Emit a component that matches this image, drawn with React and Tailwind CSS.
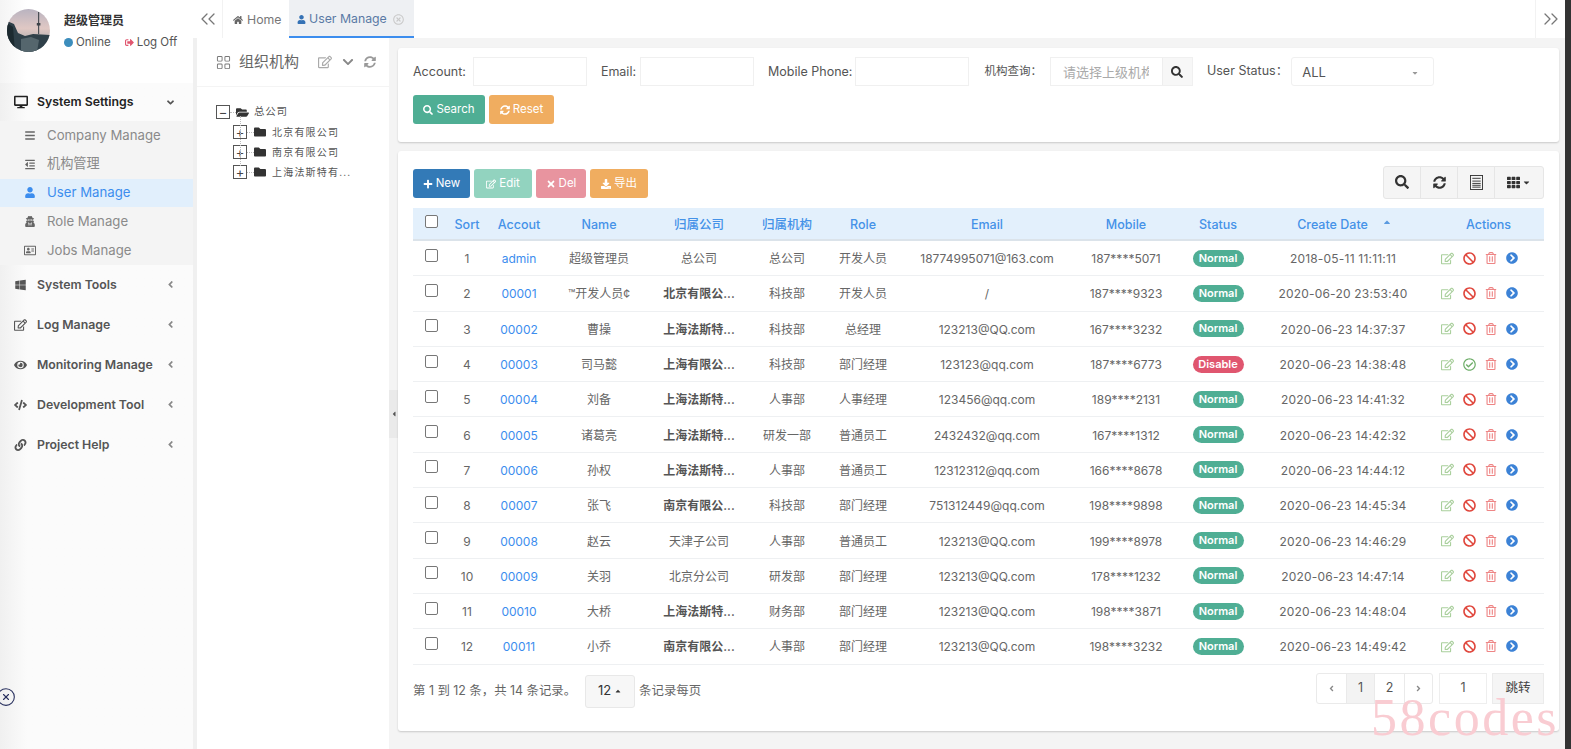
import React from 'react';
import {
  FaDesktop, FaWindows, FaRegEdit, FaEye, FaCode, FaLink, FaAngleDown, FaAngleLeft, FaAngleRight,
  FaHome, FaUser, FaBars, FaOutdent, FaUserSecret, FaRegAddressCard,
  FaSignOutAlt, FaSearch, FaSyncAlt, FaPlus, FaTimes, FaDownload, FaTh, FaCaretDown, FaCaretUp,
  FaBan, FaRegCheckCircle, FaRegTrashAlt, FaChevronCircleRight, FaChevronDown, FaFolder, FaFolderOpen, FaRegTimesCircle, FaCaretLeft,
} from 'react-icons/fa';
import { BsGrid } from 'react-icons/bs';
import { ChevronsLeft, ChevronsRight, CircleX } from 'lucide-react';

const FONT = "font-['Inter','Noto_Sans_CJK_SC',sans-serif]";

const rows = [
  ['1', 'admin', '超级管理员', '总公司', false, '总公司', '开发人员', '18774995071@163.com', '187****5071', true, '2018-05-11 11:11:11'],
  ['2', '00001', '™开发人员¢', '北京有限公...', true, '科技部', '开发人员', '/', '187****9323', true, '2020-06-20 23:53:40'],
  ['3', '00002', '曹操', '上海法斯特...', true, '科技部', '总经理', '123213@QQ.com', '167****3232', true, '2020-06-23 14:37:37'],
  ['4', '00003', '司马懿', '上海有限公...', true, '科技部', '部门经理', '123123@qq.com', '187****6773', false, '2020-06-23 14:38:48'],
  ['5', '00004', '刘备', '上海法斯特...', true, '人事部', '人事经理', '123456@qq.com', '189****2131', true, '2020-06-23 14:41:32'],
  ['6', '00005', '诸葛亮', '上海法斯特...', true, '研发一部', '普通员工', '2432432@qq.com', '167****1312', true, '2020-06-23 14:42:32'],
  ['7', '00006', '孙权', '上海法斯特...', true, '人事部', '普通员工', '12312312@qq.com', '166****8678', true, '2020-06-23 14:44:12'],
  ['8', '00007', '张飞', '南京有限公...', true, '科技部', '部门经理', '751312449@qq.com', '198****9898', true, '2020-06-23 14:45:34'],
  ['9', '00008', '赵云', '天津子公司', false, '人事部', '普通员工', '123213@QQ.com', '199****8978', true, '2020-06-23 14:46:29'],
  ['10', '00009', '关羽', '北京分公司', false, '研发部', '部门经理', '123213@QQ.com', '178****1232', true, '2020-06-23 14:47:14'],
  ['11', '00010', '大桥', '上海法斯特...', true, '财务部', '部门经理', '123213@QQ.com', '198****3871', true, '2020-06-23 14:48:04'],
  ['12', '00011', '小乔', '南京有限公...', true, '人事部', '部门经理', '123213@QQ.com', '198****3232', true, '2020-06-23 14:49:42'],
];

const subMenu = [
  [FaBars, 'Company Manage'],
  [FaOutdent, '机构管理'],
  [FaUser, 'User Manage', true],
  [FaUserSecret, 'Role Manage'],
  [FaRegAddressCard, 'Jobs Manage'],
];

const mainMenu = [
  [FaWindows, 'System Tools'],
  [FaRegEdit, 'Log Manage'],
  [FaEye, 'Monitoring Manage'],
  [FaCode, 'Development Tool'],
  [FaLink, 'Project Help'],
];

// 头像
const Avatar = () => (
  <svg viewBox="0 0 43 43" className="w-[43px] h-[43px] shrink-0">
    <defs>
      <linearGradient id="sky" x1="0" y1="0" x2="0" y2="1">
        <stop offset="0" stopColor="#b9b3c0" />
        <stop offset="0.45" stopColor="#e0c8c4" />
        <stop offset="1" stopColor="#8c9aa0" />
      </linearGradient>
      <clipPath id="round"><circle cx="21.5" cy="21.5" r="21.5" /></clipPath>
    </defs>
    <g clipPath="url(#round)">
      <rect width="43" height="43" fill="url(#sky)" />
      <path d="M0 12 L7 15 L11 24 L18 27 L26 25 L43 26 L43 43 L0 43 Z" fill="#2f4049" />
      <path d="M0 14 L6 18 L8 43 L0 43 Z" fill="#1c2a30" />
      <path d="M14 30 L24 28 L32 31 L30 43 L14 43 Z" fill="#55666d" />
      <rect x="31" y="3" width="1.2" height="22" fill="#4a4f55" />
      <rect x="29.8" y="14" width="3.6" height="2.5" fill="#3d4248" />
    </g>
  </svg>
);

const Sidebar = () => (
  <aside className="w-[193px] shrink-0 bg-linear-to-r from-[#f0f0f0] to-[#fbfbfb] to-[14%] relative">
    <div className="h-[83px] bg-linear-to-r from-[#f4f4f4] to-white to-[14%] flex pl-[7px] pt-[9px]">
      <Avatar />
      <div className="ml-[14px] pt-[4px]">
        <div className="text-[12px] leading-[16px] font-semibold text-[#333]">超级管理员</div>
        <div className="flex items-center mt-[5px] text-[11.5px] leading-[16px] text-[#555]">
          <span className="w-[9px] h-[9px] rounded-full bg-[#3c8dbc]" />
          <span className="ml-[3px]">Online</span>
          <FaSignOutAlt className="ml-[14px] text-[9px] text-[#e0566f]" />
          <span className="ml-[3px]">Log Off</span>
        </div>
      </div>
    </div>
    <div className="h-[38px] flex items-center pl-[14px] pr-[17px] text-[#222]">
      <FaDesktop className="text-[14px] w-[14px]" />
      <span className="ml-[9px] text-[12.3px] font-semibold">System Settings</span>
      <FaAngleDown className="ml-auto text-[11px] text-[#555]" />
    </div>
    <div className="bg-[#f4f4f4]">
      {subMenu.map(([Icon, label, active]) => (
        <div key={label} className={`h-[28.8px] flex items-center pl-[24px] text-[13.2px] ${active ? 'bg-[#e1effc] text-[#3c8dee]' : 'text-[#8a8a8a]'}`}>
          <Icon className={`w-[12px] text-[11px] ${active ? 'text-[#3c8dee]' : 'text-[#666]'}`} />
          <span className="ml-[11px]">{label}</span>
        </div>
      ))}
    </div>
    {mainMenu.map(([Icon, label]) => (
      <div key={label} className="h-[40px] flex items-center pl-[14px] pr-[17px] text-[#555]">
        <Icon className="w-[13px] text-[12px]" />
        <span className="ml-[10px] text-[12.3px] font-semibold">{label}</span>
        <FaAngleLeft className="ml-auto text-[11px] text-[#888]" />
      </div>
    ))}
    <CircleX size={20} strokeWidth={1.3} className="absolute left-[-4px] top-[687px] text-[#28305e]" />
  </aside>
);

const TopBar = () => (
  <div className="h-[38px] flex items-stretch bg-white shrink-0">
    <div className="w-[30px] flex items-center justify-center text-[#777] border-r border-[#f2f2f2]">
      <ChevronsLeft size={24} strokeWidth={1.3} />
    </div>
    <div className="w-[66px] flex items-center pl-[10px] pt-[2px] text-[12.3px] text-[#777]">
      <FaHome className="text-[10px] mr-[4px] text-[#666]" />Home
    </div>
    <div className="flex items-center w-[125px] pl-[8px] pt-[2px] text-[12.3px] text-[#5a7aa5] bg-[#eef0f3] border-b-2 border-[#3c8dee]">
      <FaUser className="text-[9px] mr-[3px] text-[#3572b5]" />User Manage
      <FaRegTimesCircle className="text-[11px] ml-[6px] text-[#c9c9c9]" />
    </div>
    <div className="ml-auto w-[30px] flex items-center justify-center text-[#777] border-l border-[#f2f2f2]">
      <ChevronsRight size={24} strokeWidth={1.3} />
    </div>
  </div>
);

const TreeBox = ({ children }) => (
  <span className="w-[14px] h-[14px] shrink-0 border border-[#555] flex items-center justify-center text-[13px] leading-none text-[#444]">{children}</span>
);

const TreeNode = ({ label, last }) => (
  <div className="h-[20px] flex items-center pl-[17px] relative">
    <span className={`absolute left-[24px] top-[-6px] ${last ? 'h-[10px]' : 'h-[20px]'} border-l border-dotted border-[#bbb]`} />
    <TreeBox>+</TreeBox>
    <span className="w-[7px] border-t border-dotted border-[#bbb]" />
    <FaFolder className="text-[12px] text-[#333]" />
    <span className="ml-[6px] text-[10px] tracking-[1.2px] text-[#555] whitespace-nowrap">{label}</span>
  </div>
);

const OrgPanel = () => (
  <div className="w-[192px] shrink-0 bg-white relative">
    <div className="h-[49px] flex items-center pl-[19px] border-b border-[#f4f4f4] text-[#888]">
      <BsGrid className="text-[15px] text-[#777]" />
      <span className="ml-[8px] text-[15px] text-[#666]">组织机构</span>
      <FaRegEdit className="ml-[19px] text-[14px] text-[#aaa]" />
      <FaChevronDown className="ml-[10px] text-[12px] text-[#888]" />
      <FaSyncAlt className="ml-[10px] text-[12px] text-[#999]" />
    </div>
    <div className="pt-[15px] pl-[19px]">
      <div className="h-[20px] flex items-center">
        <TreeBox>−</TreeBox>
        <span className="w-[6px] border-t border-dotted border-[#bbb]" />
        <FaFolderOpen className="text-[13px] text-[#333]" />
        <span className="ml-[5px] text-[10.5px] tracking-[0.7px] text-[#555]">总公司</span>
      </div>
      <TreeNode label="北京有限公司" />
      <TreeNode label="南京有限公司" />
      <TreeNode label="上海法斯特有..." last />
    </div>
    <div className="absolute right-[-9px] top-[352px] w-[9px] h-[48px] bg-[#eaeaea] flex items-center justify-center">
      <FaCaretLeft className="text-[8px] text-[#555]" />
    </div>
  </div>
);

const Field = ({ label, w, labelClass = '' }) => (
  <div className="flex items-center">
    <span className={`text-[12.5px] text-[#555] pt-[2px] ${labelClass}`}>{label}</span>
    <div className={`${w} h-[29px] border border-[#f0f0f0] bg-white`} />
  </div>
);

const Btn = ({ icon: Icon, label, className }) => (
  <div className={`h-[29px] rounded-[3px] flex items-center justify-center text-[11.5px] text-white ${className}`}>
    <Icon className="text-[10px] mr-[3px]" />{label}
  </div>
);

const SearchCard = () => (
  <div className="h-[94px] bg-white rounded-[3px] shadow-[0_1px_2px_rgba(0,0,0,0.18)] pl-[15px] pt-[9px]">
    <div className="flex items-center">
      <Field label="Account:" w="w-[114px]" labelClass="mr-[7px]" />
      <Field label="Email:" w="w-[114px]" labelClass="ml-[14px] mr-[4px]" />
      <Field label="Mobile Phone:" w="w-[114px]" labelClass="ml-[14px] mr-[3px]" />
      <span className="ml-[15px] text-[11.5px] text-[#555]">机构查询：</span>
      <div className="ml-[8px] w-[143px] h-[29px] border border-[#f0f0f0] flex">
        <div className="flex-1 min-w-0 pl-[12px] pr-0 mr-[13px] pt-[1px] text-[13px] leading-[27px] text-[#aaa] overflow-hidden whitespace-nowrap">请选择上级机构</div>
        <div className="w-[30px] shrink-0 bg-[#f7f7f7] border-l border-[#eee] flex items-center justify-center">
          <FaSearch className="text-[12px] text-[#333]" />
        </div>
      </div>
      <span className="ml-[14px] text-[12.5px] text-[#555]">User Status：</span>
      <div className="ml-[3px] w-[143px] h-[29px] border border-[#f0f0f0] rounded-[3px] flex items-center pl-[10px] pr-[14px] pt-[2px] text-[13px] text-[#555]">
        ALL
        <FaCaretDown className="ml-auto text-[8px] text-[#999]" />
      </div>
    </div>
    <div className="flex gap-[4px] mt-[9px]">
      <Btn icon={FaSearch} label="Search" className="w-[72px] bg-[#4fae94]" />
      <Btn icon={FaSyncAlt} label="Reset" className="w-[65px] bg-[#f0ad60]" />
    </div>
  </div>
);

const ToolBtn = ({ children, className = '' }) => (
  <div className={`h-[33px] bg-[#f5f5f5] border border-[#e6e6e6] -ml-px flex items-center justify-center text-[#333] ${className}`}>{children}</div>
);

const ListIcon = () => (
  <svg viewBox="0 0 14 16" className="w-[13px] h-[15px]" fill="none" stroke="#333" strokeWidth="1">
    <rect x="0.5" y="0.5" width="13" height="15" />
    <path d="M2.5 3.5h9M2.5 6.5h9M2.5 9h9M2.5 11h9M2.5 13h9" />
  </svg>
);

const COLS = 'grid-cols-[36px_36px_68px_92px_108px_68px_84px_164px_114px_70px_180px_1fr]';

const TableCard = () => (
  <div className="mt-[9px] h-[580px] bg-white rounded-[3px] shadow-[0_1px_2px_rgba(0,0,0,0.18)] pl-[15px] pr-[15px] pt-[15px] relative">
    <div className="flex items-center justify-between h-[33px]">
      <div className="flex gap-[4px] pt-[2px]">
        <Btn icon={FaPlus} label="New" className="w-[57px] bg-[#337ab7]" />
        <Btn icon={FaRegEdit} label="Edit" className="w-[58px] bg-[#92d3bf]" />
        <Btn icon={FaTimes} label="Del" className="w-[50px] bg-[#e8949f]" />
        <Btn icon={FaDownload} label="导出" className="w-[58px] bg-[#f0ad60]" />
      </div>
      <div className="flex -mt-[1px]">
        <ToolBtn className="w-[38px] rounded-l-[3px]"><FaSearch className="text-[14px]" /></ToolBtn>
        <ToolBtn className="w-[38px]"><FaSyncAlt className="text-[13px]" /></ToolBtn>
        <ToolBtn className="w-[38px]"><ListIcon /></ToolBtn>
        <ToolBtn className="w-[50px] rounded-r-[3px]"><FaTh className="text-[13px]" /><FaCaretDown className="text-[9px] ml-[2px]" /></ToolBtn>
      </div>
    </div>
    <div className={`mt-[9px] h-[33px] pt-[4px] grid ${COLS} items-center bg-[#e3f0fc] border-b-2 border-[#dbe3ea] text-[12.5px] text-[#4592e8] text-center font-medium`}>
      <div className="flex justify-center"><span className="w-[13px] h-[13px] border border-[#777] rounded-[2px] bg-white -mt-[8px]" /></div>
      <div>Sort</div>
      <div>Accout</div>
      <div>Name</div>
      <div>归属公司</div>
      <div>归属机构</div>
      <div>Role</div>
      <div>Email</div>
      <div>Mobile</div>
      <div>Status</div>
      <div className="flex items-center justify-center pl-[3px]">Create Date<FaCaretUp className="ml-[14px] w-[10px] -mt-[8px] text-[10px] text-[#5a9ae0]" /></div>
      <div>Actions</div>
    </div>
    {rows.map((r) => (
      <div key={r[0]} className={`h-[35.3px] pt-[2px] grid ${COLS} items-center border-b border-[#eef0f2] text-[12px] text-[#666] text-center`}>
        <div className="flex justify-center"><span className="w-[13px] h-[13px] border border-[#777] rounded-[2px] -mt-[8px]" /></div>
        <div>{r[0]}</div>
        <div className="text-[#3c8dee]">{r[1]}</div>
        <div>{r[2]}</div>
        <div className={r[4] ? 'font-semibold text-[#555]' : ''}>{r[3]}</div>
        <div>{r[5]}</div>
        <div>{r[6]}</div>
        <div>{r[7]}</div>
        <div>{r[8]}</div>
        <div className="flex justify-center -mt-[2px]">
          <span className={`h-[17px] w-[51px] rounded-full text-[11px] leading-[17px] font-semibold text-white ${r[9] ? 'bg-[#4fae94]' : 'bg-[#e0566f]'}`}>{r[9] ? 'Normal' : 'Disable'}</span>
        </div>
        <div className="tracking-[0.2px]">{r[10]}</div>
        <div className="flex items-center pl-[8px] gap-[9px] text-[13px] -mt-[2px]">
          <FaRegEdit className="text-[#a9cf9c]" />
          {r[9] ? <FaBan className="text-[#e0483e]" /> : <FaRegCheckCircle className="text-[#6fae6a]" />}
          <FaRegTrashAlt className="text-[12px] text-[#ee8585]" />
          <FaChevronCircleRight className="text-[12px] text-[#3c82d6]" />
        </div>
      </div>
    ))}
    <div className="flex items-start justify-between mt-[8px]">
      <div className="flex items-center text-[12.4px] text-[#666] mt-[2px]">
        <span>第 1 到 12 条，共 14 条记录。</span>
        <div className="ml-[9px] w-[50px] h-[33px] bg-[#f7f7f7] border border-[#e8e8e8] rounded-[3px] flex items-center justify-center text-[13px] text-[#333]">
          12<FaCaretUp className="ml-[3px] text-[8px]" />
        </div>
        <span className="ml-[4px]">条记录每页</span>
      </div>
      <div className="flex items-center text-[12.5px] text-[#555]">
        <div className="flex h-[31px] border border-[#eaeaea] rounded-[3px]">
          <div className="w-[29px] flex items-center justify-center text-[#888]"><FaAngleLeft className="text-[9px]" /></div>
          <div className="w-[29px] flex items-center justify-center bg-[#f3f3f3] border-x border-[#eaeaea]">1</div>
          <div className="w-[30px] flex items-center justify-center border-r border-[#eaeaea]">2</div>
          <div className="w-[27px] flex items-center justify-center text-[#888]"><FaAngleRight className="text-[9px]" /></div>
        </div>
        <div className="ml-[6px] w-[48px] h-[31px] border border-[#eeeeee] flex items-center justify-center">1</div>
        <div className="ml-[5px] w-[52px] h-[31px] bg-[#f5f5f5] border border-[#ebebeb] flex items-center justify-center text-[#444]">跳转</div>
      </div>
    </div>
    <div className="absolute right-[0px] bottom-[-13px] font-['Liberation_Serif',serif] text-[52px] leading-none tracking-[2.5px] text-[#f9ccd2] pointer-events-none">58codes</div>
  </div>
);

export default function App() {
  return (
    <div className={`w-[1571px] h-[749px] flex overflow-hidden bg-[#f4f4f4] ${FONT}`}>
      <Sidebar />
      <div className="flex-1 flex flex-col min-w-0">
        <TopBar />
        <div className="flex-1 flex min-h-0">
          <div className="w-[4px] bg-[#f0f0f0]" />
          <OrgPanel />
          <div className="flex-1 pl-[9px] pr-[6px] pt-[10px] min-w-0">
            <SearchCard />
            <TableCard />
          </div>
        </div>
      </div>
      <div className="w-[6px] shrink-0 bg-[#333333]" />
    </div>
  );
}
